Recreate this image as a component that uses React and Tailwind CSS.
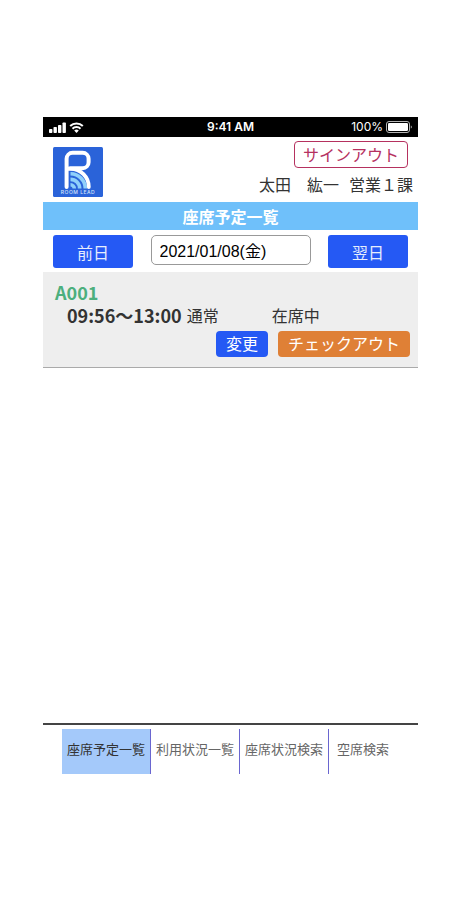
import { useState } from "react";

const StatusBar = () => (
  <div className="grid grid-cols-3 items-center h-5 bg-black text-white px-1.5 font-['Inter',sans-serif]">
    <div className="flex items-center gap-[3px]">
      <svg width="17" height="11" viewBox="0 0 17 11" fill="currentColor">
        <rect x="0" y="7" width="3.4" height="4" rx="0.8" />
        <rect x="4.5" y="5" width="3.4" height="6" rx="0.8" />
        <rect x="9" y="3" width="3.4" height="8" rx="0.8" />
        <rect x="13.5" y="0.5" width="3.4" height="10.5" rx="0.8" />
      </svg>
      <svg
        width="15"
        height="11"
        viewBox="0 0 14 11"
        fill="none"
        stroke="currentColor"
        strokeWidth="2"
      >
        <path d="M0.7 4a8.9 8.9 0 0 1 12.6 0" />
        <path d="M3 6.7a5.6 5.6 0 0 1 8 0" />
        <path d="M7 11 4.7 8.6a3.2 3.2 0 0 1 4.6 0Z" fill="currentColor" stroke="none" />
      </svg>
    </div>
    <span className="text-center text-xs font-semibold leading-5">9:41 AM</span>
    <div className="flex items-center justify-end gap-[3px] text-xs leading-5">
      <span>100%</span>
      <svg width="26" height="12" viewBox="0 0 26 12">
        <rect
          x="0.5"
          y="0.5"
          width="23"
          height="11"
          rx="2.5"
          fill="none"
          stroke="#b5b5b5"
        />
        <rect x="2" y="2" width="20" height="8" rx="1.3" fill="#fff" />
        <path d="M24.8 4.5v3a1.6 1.6 0 0 0 0-3Z" fill="#b5b5b5" />
      </svg>
    </div>
  </div>
);

const Logo = () => (
  <svg
    width="50"
    height="50"
    viewBox="0 0 50 50"
    role="img"
    aria-label="ROOM LEAD"
  >
    <rect width="50" height="50" rx="1.5" fill="#2a63d9" />
    <g fill="none" stroke="#8fd0fa" strokeWidth="3.6">
      <path d="M17.5 37.8a3.8 3.8 0 0 1 3.8 3.8" />
      <path d="M17.5 32.4a9.2 9.2 0 0 1 9.2 9.2" />
      <path d="M17.5 26.8a14.8 14.8 0 0 1 14.8 14.8" />
    </g>
    <g fill="none" stroke="#fff" strokeWidth="4">
      <path
        d="M13.6 40V11.8a6 6 0 0 1 6-6h10a6 6 0 0 1 6 6v3.4a6 6 0 0 1-6 6H17"
        strokeLinecap="round"
      />
      <path
        d="M15 21.8h2.6a18.2 18.2 0 0 1 18.2 18.2"
        strokeWidth="3.8"
        strokeLinecap="round"
      />
    </g>
    <text
      x="25"
      y="47"
      textAnchor="middle"
      fill="#d6e5fb"
      fontSize="5"
      fontWeight="500"
      className="tracking-widest"
      fontFamily="Inter, sans-serif"
    >
      ROOM LEAD
    </text>
  </svg>
);

const App = () => {
  const [date, setDate] = useState("2021/01/08(金)");
  const tabs = [
    { label: "座席予定一覧", active: true },
    { label: "利用状況一覧" },
    { label: "座席状況検索" },
    { label: "空席検索" },
  ];

  return (
    <div className="min-h-screen flex flex-col bg-white text-[#333] pl-[43px] pr-[42px] pt-[117px] pb-[126px] font-['Noto_Sans_CJK_JP',sans-serif]">
      <StatusBar />
      <header className="flex justify-between pl-2.5 pt-1 pb-[5px]">
        <div className="pt-1.5">
          <Logo />
        </div>
        <div className="flex flex-col items-end">
          <button className="h-[27px] px-2 pb-1 mr-2.5 border border-[#b5315f] rounded text-base leading-6 text-[#b5315f]">
            サインアウト
          </button>
          <div className="flex gap-2.5 pr-[5px] pt-1 text-base leading-6">
            <span>太田　紘一</span>
            <span>営業１課</span>
          </div>
        </div>
      </header>

      <h1 className="bg-[#6fc0fa] text-white text-center text-base font-bold leading-7">
        座席予定一覧
      </h1>

      <div className="flex justify-between items-start px-2.5 pt-[5px] pb-1">
        <button className="w-20 h-[33px] rounded-[3px] bg-[#2559f4] text-[#e6edfd] text-base">
          前日
        </button>
        <input
          type="text"
          aria-label="日付"
          value={date}
          onChange={(e) => setDate(e.target.value)}
          className="w-40 h-[30px] px-2 border border-[#999] rounded-[5px] bg-white text-black text-base font-['Liberation_Sans','Noto_Sans_CJK_JP',sans-serif]"
        />
        <button className="w-20 h-[33px] rounded-[3px] bg-[#2559f4] text-[#e6edfd] text-base">
          翌日
        </button>
      </div>

      <main className="flex-1">
        <section className="bg-[#eee] border-b border-[#aaa] pt-2 pb-2.5 pl-3 pr-2">
          <h2 className="text-lg font-bold leading-6 text-[#4caf7d]">A001</h2>
          <div className="flex items-center pl-3 leading-[22px]">
            <span className="text-lg leading-[22px] font-bold">09:56～13:00</span>
            <span className="ml-[5px] w-[85px]">通常</span>
            <span>在席中</span>
          </div>
          <div className="flex justify-end gap-2.5 pt-[5px]">
            <button className="h-[26px] px-2.5 pb-1 rounded bg-[#2559f4] text-white text-base leading-6">
              変更
            </button>
            <button className="h-[26px] px-2.5 pb-1 rounded bg-[#df8036] text-white text-base leading-6">
              チェックアウト
            </button>
          </div>
        </section>
      </main>

      <nav className="flex border-t-2 border-[#444] pt-1 pl-[19px] text-[13px]">
        {tabs.map((tab, index) => (
          <a
            href="#"
            key={index}
            className={`h-[45px] pt-2.5 leading-5 ${
              index == tabs.length - 1
                ? "px-2"
                : "px-[5px] border-r border-[#6a66d0]"
            } ${tab.active ? "bg-[#a4c9fa] text-[#333]" : "text-[#666]"}`}
          >
            {tab.label}
          </a>
        ))}
      </nav>
    </div>
  );
};

export default App;
